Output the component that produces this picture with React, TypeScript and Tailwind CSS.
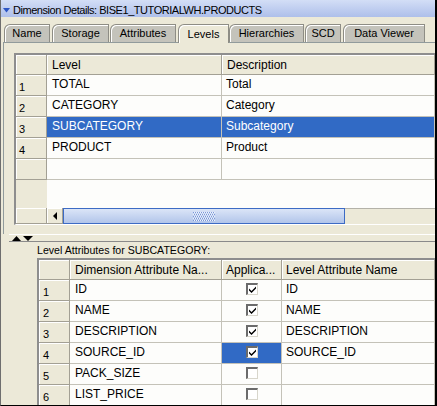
import React from "react";

const topRows = [
  { n: "1", level: "TOTAL", desc: "Total", sel: false },
  { n: "2", level: "CATEGORY", desc: "Category", sel: false },
  { n: "3", level: "SUBCATEGORY", desc: "Subcategory", sel: true },
  { n: "4", level: "PRODUCT", desc: "Product", sel: false },
  { n: "", level: "", desc: "", sel: false },
];

const attrRows = [
  { n: "1", dim: "ID", chk: true, lvl: "ID", sel: false },
  { n: "2", dim: "NAME", chk: true, lvl: "NAME", sel: false },
  { n: "3", dim: "DESCRIPTION", chk: true, lvl: "DESCRIPTION", sel: false },
  { n: "4", dim: "SOURCE_ID", chk: true, lvl: "SOURCE_ID", sel: true },
  { n: "5", dim: "PACK_SIZE", chk: false, lvl: "", sel: false },
  { n: "6", dim: "LIST_PRICE", chk: false, lvl: "", sel: false },
];

const tabs = [
  { label: "Name", cls: "w-[46px]" },
  { label: "Storage", cls: "w-[57px] ml-[2px]" },
  { label: "Attributes", cls: "w-[66px] ml-[1px]" },
  { label: "Levels", cls: "w-[51px] ml-[2px]", active: true },
  { label: "Hierarchies", cls: "w-[75px]" },
  { label: "SCD", cls: "w-[36px] ml-[1px]" },
  { label: "Data Viewer", cls: "w-[82px] ml-[2px]" },
];

const rowHead =
  "w-[31px] shrink-0 bg-[#ECE9D8] border-r border-b border-[#a3a094] shadow-[inset_1px_1px_0_#ffffff]";
const headCell =
  "bg-[#ECE9D8] border-r border-b border-[#a3a094] shadow-[inset_1px_1px_0_#ffffff] text-[12px] leading-[14px] pl-[5px] flex items-center whitespace-nowrap overflow-hidden";

function CheckBox({ checked }: { checked: boolean }) {
  return (
    <div className="w-[12px] h-[12px] bg-white border-t-2 border-l-2 border-t-[#6b6b6b] border-l-[#6b6b6b] border-r border-b border-r-[#d8d6cc] border-b-[#d8d6cc] flex items-center justify-center">
      {checked && (
        <svg width="7" height="7" viewBox="0 0 7 7">
          <path d="M0 2.5 L2.5 5 L7 0.5 L7 2.5 L2.5 7 L0 4.5 Z" fill="#000" />
        </svg>
      )}
    </div>
  );
}

export default function App() {
  return (
    <div className="w-[437px] h-[406px] flex flex-col bg-[#ECE9D8] border-l border-l-[#6e6e6e] border-r-2 border-r-black border-b border-b-black overflow-hidden font-['Liberation_Sans',Arial,sans-serif] text-black">
      {/* Title bar */}
      <div className="h-[17px] shrink-0 flex items-start bg-linear-to-b from-[#d3def6] to-[#aebfea]">
        <svg className="ml-[2px] mt-[8px]" width="7" height="5" viewBox="0 0 7 5">
          <path d="M0 0 L7 0 L3.5 4.5 Z" fill="#2c55c4" />
        </svg>
        <span className="ml-[3px] pt-[4px] text-[11px] leading-[13px] tracking-[-0.45px] whitespace-nowrap">
          Dimension Details: BISE1_TUTORIALWH.PRODUCTS
        </span>
      </div>

      {/* Tabs */}
      <div className="mt-[7px] h-[18px] shrink-0 flex items-end pl-[3px]">
        {tabs.map((t) =>
          t.active ? (
            <div
              key={t.label}
              className={`${t.cls} relative z-10 h-[19px] -mb-[1px] bg-[#ECE9D8] border border-b-0 border-[#8e8d85] rounded-tl-[6px] shadow-[inset_1px_1px_0_#ffffff] flex items-center justify-center text-[11px] leading-[13px]`}
            >
              {t.label}
            </div>
          ) : (
            <div
              key={t.label}
              className={`${t.cls} h-[18px] bg-[#c4c3bb] border border-b-0 border-[#8e8d85] rounded-tl-[6px] shadow-[inset_1px_1px_0_#ffffff] flex items-center justify-center text-[11px] leading-[13px]`}
            >
              {t.label}
            </div>
          )
        )}
      </div>

      {/* Top panel */}
      <div className="h-[192px] shrink-0 ml-[2px] border-t border-l border-[#919b9c]">
        <div className="mt-[10px] ml-[10px] w-[421px] h-[172px] flex flex-col border-t-2 border-l-2 border-[#8e8e8e] border-b border-b-white bg-[#fdfdfb]">
          {/* header */}
          <div className="h-[20px] shrink-0 flex">
            <div className={rowHead} />
            <div className={`${headCell} w-[175px] shrink-0`}>Level</div>
            <div className={`${headCell} flex-1`}>Description</div>
          </div>
          {topRows.map((r, i) => (
            <div key={i} className="h-[21px] shrink-0 flex">
              <div className={`${rowHead} text-[11px] leading-[13px] pl-[3px] pt-[6px]`}>{r.n}</div>
              <div
                className={`w-[175px] shrink-0 border-r border-b border-[#c4c2b8] text-[12px] leading-[14px] pt-[2px] pl-[5px] whitespace-nowrap ${
                  r.sel ? "bg-[#316AC5] text-white" : ""
                }`}
              >
                {r.level}
              </div>
              <div
                className={`flex-1 border-r border-b border-[#c4c2b8] text-[12px] leading-[14px] pt-[2px] pl-[4px] whitespace-nowrap ${
                  r.sel ? "bg-[#316AC5] text-white" : ""
                }`}
              >
                {r.desc}
              </div>
            </div>
          ))}
          {/* blank area */}
          <div className="flex-1 flex">
            <div className="w-[31px] shrink-0 bg-[#ECE9D8]" />
            <div className="flex-1" />
          </div>
          {/* scrollbar */}
          <div className="h-[16px] shrink-0 flex">
            <div className={`${rowHead}`} />
            <div className="w-[16px] shrink-0 bg-[#ECE9D8] border-r border-b border-[#a3a094] shadow-[inset_1px_1px_0_#ffffff] flex items-center justify-center">
              <svg width="4" height="8" viewBox="0 0 4 8">
                <path d="M4 0 L0 4 L4 8 Z" fill="#000" />
              </svg>
            </div>
            <div className="w-[282px] shrink-0 border border-[#3d6bc4] bg-linear-to-b from-[#dbe5f7] to-[#b2c5ea] flex items-center">
              <svg className="ml-[129px]" width="22" height="9" viewBox="0 0 22 9">
                {Array.from({ length: 5 }).map((_, j) =>
                  Array.from({ length: 11 }).map((__, k) => (
                    <rect
                      key={`${j}-${k}`}
                      x={k * 2 + (j % 2)}
                      y={j * 2}
                      width="1"
                      height="1"
                      fill="#7b98d8"
                    />
                  ))
                )}
                {Array.from({ length: 5 }).map((_, j) =>
                  Array.from({ length: 11 }).map((__, k) => (
                    <rect
                      key={`w${j}-${k}`}
                      x={k * 2 + ((j + 1) % 2)}
                      y={j * 2}
                      width="1"
                      height="1"
                      fill="#eef3fc"
                    />
                  ))
                )}
              </svg>
            </div>
            <div className="flex-1 bg-[#ECE9D8] border-t border-[#b4b2a8]" />
          </div>
        </div>
      </div>

      {/* Split divider */}
      <div className="h-[8px] shrink-0 ml-[8px] border-t border-t-white border-b border-b-[#8a8a8a] flex items-center pl-[3px]">
        <svg width="22" height="5" viewBox="0 0 22 5">
          <path d="M0 5 L4.5 0 L9 5 Z" fill="#000" />
          <path d="M11 0 L21 0 L16 5 Z" fill="#000" />
        </svg>
      </div>

      {/* Label */}
      <div className="h-[16px] shrink-0 pl-[36px] flex items-center text-[10.6px] leading-[13px] whitespace-nowrap">
        Level Attributes for SUBCATEGORY:
      </div>

      {/* Bottom table */}
      <div className="ml-[36px] w-[398px] flex-1 flex flex-col border-t-2 border-l-2 border-[#8e8e8e] bg-[#fdfdfb]">
        <div className="h-[20px] shrink-0 flex">
          <div className={rowHead} />
          <div className={`${headCell} w-[152px] shrink-0`}>Dimension Attribute Na...</div>
          <div className={`${headCell} w-[60px] shrink-0 !pl-[4px]`}>Applica...</div>
          <div className={`${headCell} flex-1 !pl-[4px]`}>Level Attribute Name</div>
        </div>
        {attrRows.map((r) => (
          <div key={r.n} className="h-[21px] shrink-0 flex">
            <div className={`${rowHead} text-[11px] leading-[13px] pl-[4px] pt-[6px]`}>{r.n}</div>
            <div className="w-[152px] shrink-0 border-r border-b border-[#c4c2b8] text-[12px] leading-[14px] pt-[2px] pl-[5px] whitespace-nowrap">
              {r.dim}
            </div>
            <div
              className={`w-[60px] shrink-0 border-r border-b border-[#c4c2b8] flex justify-center pt-[3px] ${
                r.sel ? "bg-[#316AC5]" : ""
              }`}
            >
              <CheckBox checked={r.chk} />
            </div>
            <div className="flex-1 border-r border-b border-[#c4c2b8] text-[12px] leading-[14px] pt-[2px] pl-[4px] whitespace-nowrap">
              {r.lvl}
            </div>
          </div>
        ))}
      </div>
    </div>
  );
}
